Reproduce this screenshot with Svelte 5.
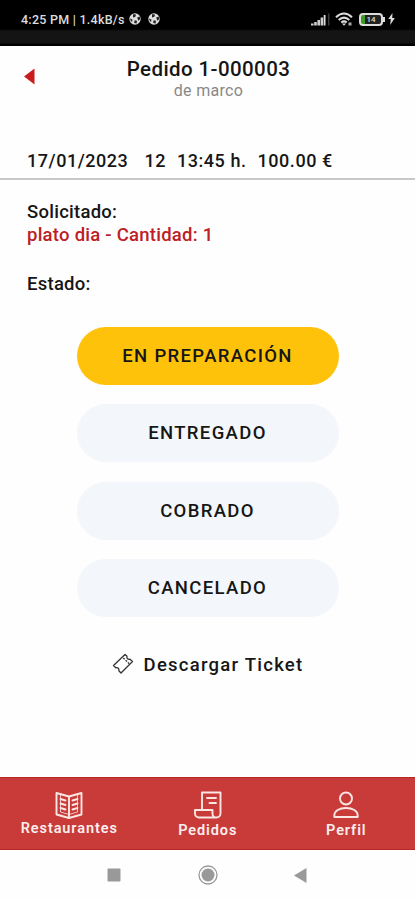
<script lang="ts">
  const states = ["EN PREPARACIÓN", "ENTREGADO", "COBRADO", "CANCELADO"];
  let current = $state("EN PREPARACIÓN");
</script>

{#snippet ball()}
  <svg class="ball" viewBox="0 0 12 12" width="12" height="12">
    <circle cx="6" cy="6" r="5.7" fill="#ddd" />
    <path d="M4 1.2l3 .4-.6 2.2-2.4.6zM8.2 4.6l2.6-1 .3 2.6-1.8 1.6zM1 5.4l2.4 1-.2 2.4-1.3-.6zM5.6 7.2l2.4.6-.4 2.6-2.4-.4z" fill="#222" />
  </svg>
{/snippet}

<div class="screen">
  <div class="statusbar">
    <div class="left">
      <span class="clock">4:25 PM | 1.4kB/s</span>
      {@render ball()}
      {@render ball()}
    </div>
    <div class="right">
      <svg width="19" height="13" viewBox="0 0 19 13">
        <path d="M0 12.5v-2h2.6v2zM3.200 12.5V9h2.6v3.5zM6.400 12.5V7H9v5.5zM9.600 12.5V4.5h2.6v8z" fill="#ccc" />
        <path d="M12.700 12.5V2h1.8v10.5z" fill="#ddd" />
        <path d="M17.300 12.5V.5h1v12z" fill="#555" />
      </svg>
      <svg class="wifi" width="18" height="14" viewBox="0 0 18 14">
        <path d="M1 5.200Q9-2.200 17 5.200M3.700 8Q9 3.200 14.300 8M6.300 10.600Q9 8.200 11.700 10.600" fill="none" stroke="#ddd" stroke-width="2" />
        <path d="M7 11.500h4L9 13.800z" fill="#ddd" />
        <path d="M13.500 10.500h3v3h-3z" fill="#aaa" />
      </svg>
      <div class="battery"><span>14</span></div>
      <svg class="bolt" width="7" height="12" viewBox="0 0 7 12">
        <path d="M4.500 0L.3 6h2.500L2.200 12 6.800 5H4.200z" fill="#ddd" />
      </svg>
    </div>
  </div>

  <header>
    <svg class="back" width="11" height="17" viewBox="0 0 11 17">
      <path d="M10.500.5v16L0 8.500z" fill="#c91d1d" />
    </svg>
    <h1>Pedido 1-000003</h1>
    <p>de marco</p>
  </header>

  <div class="summary">
    <span class="date">17/01/2023</span>
    <span class="table">12</span>
    <span class="hour">13:45 h.</span>
    <span class="price">100.00 €</span>
  </div>

  <main>
    <div class="label">Solicitado:</div>
    <div class="dish">plato dia - Cantidad: 1</div>
    <div class="label estado">Estado:</div>

    <div class="states">
      {#each states as s}
        <button class:active={s === current} onclick={() => (current = s)}>{s}</button>
      {/each}
    </div>

    <div class="ticket">
      <svg width="22" height="22" viewBox="0 0 22 22" fill="none" stroke="#333" stroke-width="1.3" stroke-linejoin="round">
        <path d="M1.500 12.500L13 1.500l2 1.800c-.6 2 1 3.500 3 2.900l2.500 2.300L9 20l-2.200-2.200c.7-2-1-3.600-3-3z" />
        <path d="M11.300 5l1.400 1.300M13.600 7.200L15 8.500M15.900 9.400l1.300 1.300" />
      </svg>
      <span>Descargar Ticket</span>
    </div>
  </main>

  <nav>
    <div class="tab rest">
      <svg width="28" height="28" viewBox="0 0 28 28">
        <path d="M1.500 2L14 5.500 26.500 2v21.500L14 27 1.500 23.500zM14 5.500V27" />
        <path class="thin" d="M5.500 3.500v17.500L14 23.500l8.500-2.500V3.500" />
        <path d="M5.500 8l5 1.500M5.500 12.500l5 1.500M5.500 17l5 1.500M17.500 9.500l5-1.500M17.500 14l5-1.500M17.500 18.500l5-1.500" />
      </svg>
      <span>Restaurantes</span>
    </div>
    <div class="tab ped">
      <svg width="28" height="28" viewBox="0 0 28 28">
        <path d="M8 18.500V1.500h18.500V22.500a4 4 0 0 1-4 4H5a4 4 0 0 1-4-4v-3.500h17.500v4a3.500 3.500 0 0 0 4 3.500M13 7h9M15.500 12h6.500" />
      </svg>
      <span>Pedidos</span>
    </div>
    <div class="tab perfil">
      <svg width="28" height="28" viewBox="0 0 28 28">
        <circle cx="14" cy="7.500" r="6" />
        <path d="M2.300 26v-1.500c0-4.500 5-7.500 11.700-7.500s11.700 3 11.700 7.500V26z" />
      </svg>
      <span>Perfil</span>
    </div>
  </nav>

  <div class="sysnav">
    <svg width="14" height="14"><rect x=".5" y=".5" width="13" height="13" rx="1" fill="#999" /></svg>
    <svg width="20" height="20"><circle cx="10" cy="10" r="9" fill="none" stroke="#999" stroke-width="1.3" /><circle cx="10" cy="10" r="6.5" fill="#999" /></svg>
    <svg width="13" height="15"><path d="M0 7.500L12.500 0v15z" fill="#999" /></svg>
  </div>
</div>

<style>
  :global(body) {
    background: #fefefe;
  }

  .screen {
    width: 415px;
    height: 900px;
    display: flex;
    flex-direction: column;
    overflow: hidden;
    font-family: Roboto, "Liberation Sans", sans-serif;
    font-weight: 500;
    color: #161616;
  }

  .statusbar {
    height: 46px;
    box-sizing: border-box;
    flex-shrink: 0;
    display: flex;
    justify-content: space-between;
    align-items: flex-start;
    padding: 12px 20px 0 21px;
    background: linear-gradient(#000 29px, #141414 31px, #141414 43px, #000 44px);
    color: #ddd;
  }
  .left, .right { display: flex; align-items: center; height: 14px; }
  .clock { font-size: 12.5px; letter-spacing: 0.25px; white-space: nowrap; margin-right: 4px; }
  .ball { margin-right: 7px; }
  .wifi { margin-left: 5px; }
  .battery {
    position: relative;
    width: 24px;
    height: 13px;
    box-sizing: border-box;
    margin-left: 6px;
    border: 2px solid #ddd;
    border-radius: 4px;
    background: linear-gradient(90deg, #3d9b1d 4px, #222 4px);
    font-size: 8px;
    line-height: 9px;
    text-align: center;
  }
  .battery::after {
    content: "";
    position: absolute;
    right: -4px;
    top: 2px;
    width: 2px;
    height: 5px;
    background: #ddd;
  }
  .bolt { margin-left: 5px; }

  header {
    position: relative;
    height: 98px;
    padding-top: 11px;
    box-sizing: border-box;
    text-align: center;
  }
  .back { position: absolute; left: 24px; top: 22px; }
  h1 { margin: 0 0 0 2px; font-size: 20.5px; line-height: 24px; font-weight: 500; letter-spacing: 0.4px; }
  p { margin: 0 0 0 2px; font-size: 16px; line-height: 19px; font-weight: 400; letter-spacing: 0.3px; color: #888; }

  .summary {
    height: 36px;
    box-sizing: border-box;
    padding: 6px 0 0 27px;
    border-bottom: 2px solid #c8c8c8;
    display: flex;
    font-size: 18px;
    line-height: 22px;
    white-space: nowrap;
    letter-spacing: 0.55px;
  }
  .table { margin-left: 16px; }
  .hour { margin-left: 11px; }
  .price { margin-left: 11px; }

  main { flex: 1; padding: 21px 27px 0; }
  .label, .dish { font-size: 18.5px; line-height: 22px; letter-spacing: 0.25px; }
  .dish { padding-top: 1px; color: #bd2024; }
  .estado { margin-top: 27px; }

  .states {
    display: flex;
    flex-direction: column;
    align-items: center;
    gap: 19.3px;
    margin-top: 32px;
  }
  button {
    width: 262px;
    height: 58px;
    border: 0;
    padding: 0;
    border-radius: 29px;
    background: #f3f6fa;
    font: 500 18.5px Roboto, "Liberation Sans", sans-serif;
    letter-spacing: 1.35px;
    color: #161616;
  }
  button.active { background: #ffc20a; }

  .ticket {
    display: flex;
    align-items: center;
    justify-content: center;
    gap: 10px;
    margin-top: 36px;
    font-size: 18.5px;
    line-height: 24px;
    letter-spacing: 1.25px;
  }
  .ticket svg { margin-top: -2px; }

  nav {
    height: 73px;
    box-sizing: border-box;
    flex-shrink: 0;
    display: grid;
    grid-template-columns: repeat(3, 138.5px);
    background: #c83b38;
    border: solid #b92825;
    border-width: 1px 0;
    color: #fbeeee;
  }
  .tab {
    display: flex;
    flex-direction: column;
    align-items: center;
    padding-top: 13px;
    font-size: 14.5px;
    line-height: 18px;
    font-weight: 600;
    letter-spacing: 0.9px;
  }
  .tab svg { fill: none; stroke: #fbe6e4; stroke-width: 1.9; stroke-linejoin: round; stroke-linecap: round; }
  .tab .thin { stroke-width: 0.8; }
  .tab span { margin-top: 1px; }
  .ped span, .perfil span { margin-top: 3px; }

  .sysnav {
    height: 50px;
    flex-shrink: 0;
    display: flex;
    align-items: center;
    padding-left: 107px;
  }
  .sysnav svg + svg { margin-left: 77px; }
  .sysnav svg:last-child { margin-left: 76px; }
</style>
